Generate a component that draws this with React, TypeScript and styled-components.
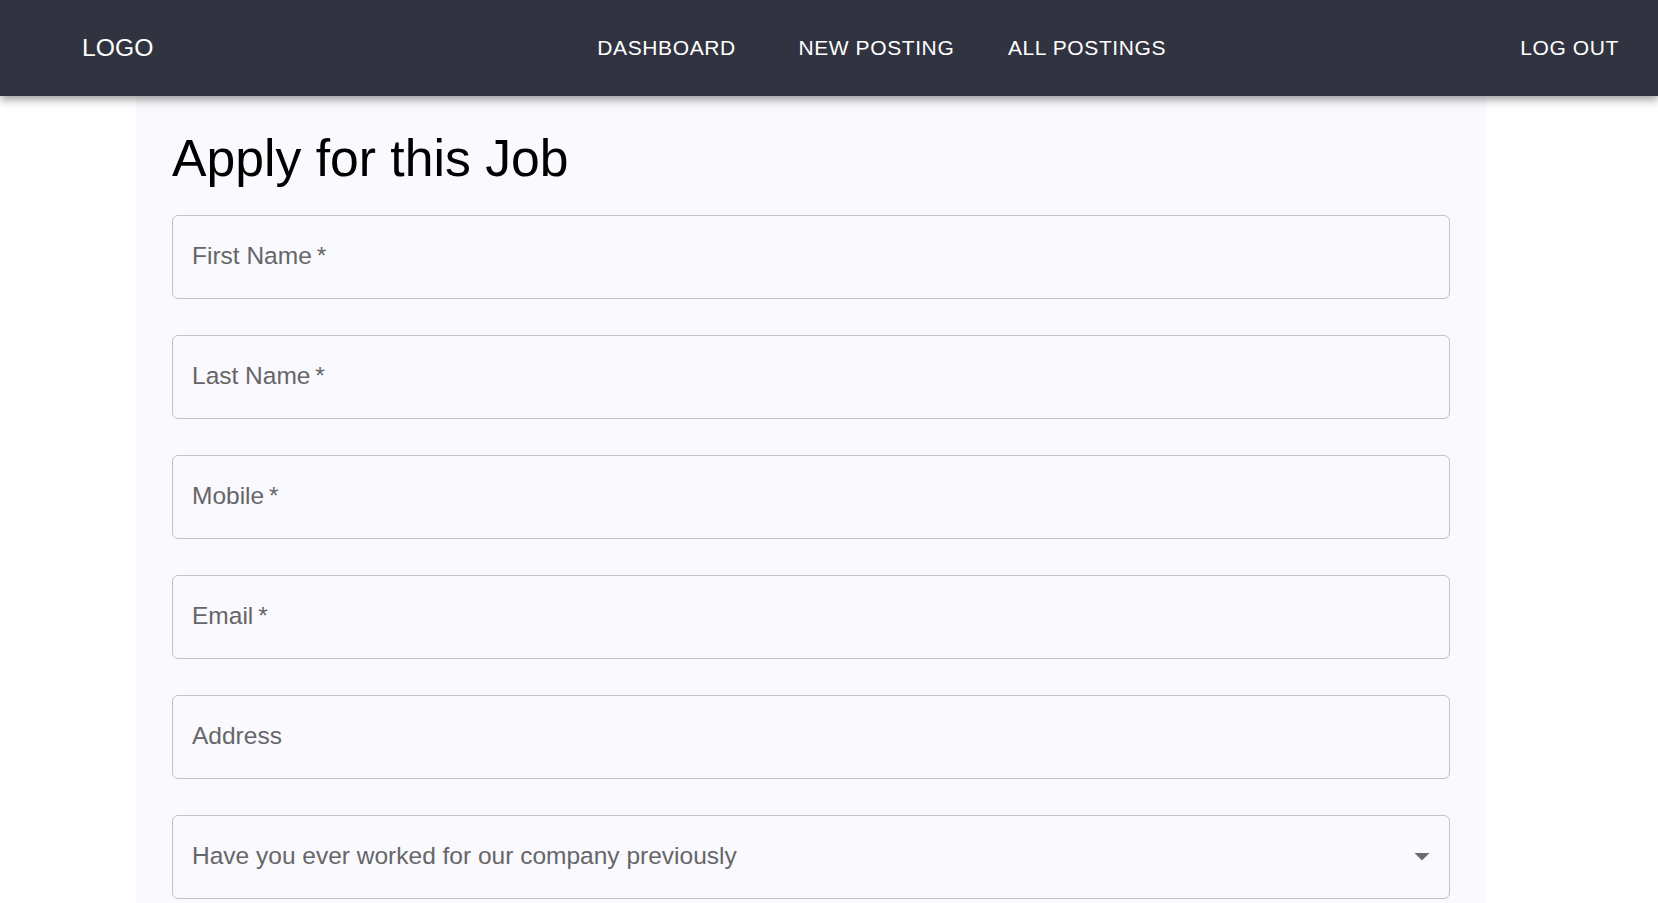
import React from "react";
import styled, { createGlobalStyle } from "styled-components";

const GlobalStyle = createGlobalStyle`
  html, body {
    margin: 0;
    padding: 0;
    background: #ffffff;
    font-family: "Liberation Sans", Arial, sans-serif;
  }
  * { box-sizing: border-box; }
`;

const Page = styled.div`
  display: flex;
  flex-direction: column;
  min-height: 100vh;
`;

const NavBar = styled.header`
  position: relative;
  z-index: 2;
  height: 96px;
  flex-shrink: 0;
  background: #313440;
  color: #ffffff;
  display: flex;
  align-items: center;
  padding: 0 39px 0 82px;
  box-shadow: 0 3px 6px -1.5px rgba(0, 0, 0, 0.2),
    0 6px 7.5px 0 rgba(0, 0, 0, 0.14), 0 1.5px 15px 0 rgba(0, 0, 0, 0.12);
`;

const Logo = styled.div`
  font-size: 24.7px;
  line-height: 28px;
  white-space: nowrap;
`;

const NavGroup = styled.nav`
  display: flex;
  align-items: center;
  margin-left: 444px;
`;

const NavLink = styled.a<{ $space?: number }>`
  font-size: 21px;
  line-height: 24px;
  letter-spacing: 0.6px;
  text-transform: uppercase;
  white-space: nowrap;
  color: #ffffff;
  cursor: pointer;
  margin-left: ${(p) => p.$space ?? 0}px;
`;

const LogOut = styled(NavLink)`
  margin-left: auto;
`;

const Panel = styled.main`
  flex: 1;
  width: 1350px;
  margin-left: 136px;
  background: #f9f9fe;
  padding: 31px 36px 0;
  display: flex;
  flex-direction: column;
`;

const Title = styled.h1`
  margin: 0 0 25px;
  font-size: 51.7px;
  line-height: 63px;
  font-weight: 400;
  color: #000000;
`;

const Field = styled.div<{ $last?: boolean }>`
  height: 84px;
  flex-shrink: 0;
  border: 1px solid #c4c4c8;
  border-radius: 6px;
  display: flex;
  align-items: flex-start;
  padding: 26px 9.5px 0 19px;
  margin-bottom: ${(p) => (p.$last ? 0 : 36)}px;
  cursor: text;
`;

const Label = styled.span`
  font-size: 24.5px;
  line-height: 28px;
  color: #666668;
  white-space: nowrap;
`;

const Arrow = styled.svg`
  width: 36px;
  height: 36px;
  margin-left: auto;
  margin-top: -4px;
  fill: #6b6b6e;
  flex-shrink: 0;
`;

const fields = ["First Name\u2009*", "Last Name\u2009*", "Mobile\u2009*", "Email\u2009*", "Address"];

export default function App() {
  return (
    <Page>
      <GlobalStyle />
      <NavBar>
        <Logo>LOGO</Logo>
        <NavGroup>
          <NavLink>Dashboard</NavLink>
          <NavLink $space={62.6}>New Posting</NavLink>
          <NavLink $space={53.6}>All Postings</NavLink>
        </NavGroup>
        <LogOut>Log Out</LogOut>
      </NavBar>
      <Panel>
        <Title>Apply for this Job</Title>
        {fields.map((f) => (
          <Field key={f}>
            <Label>{f}</Label>
          </Field>
        ))}
        <Field $last>
          <Label>Have you ever worked for our company previously</Label>
          <Arrow viewBox="0 0 24 24" aria-hidden="true">
            <path d="M7 10l5 5 5-5z" />
          </Arrow>
        </Field>
      </Panel>
    </Page>
  );
}
